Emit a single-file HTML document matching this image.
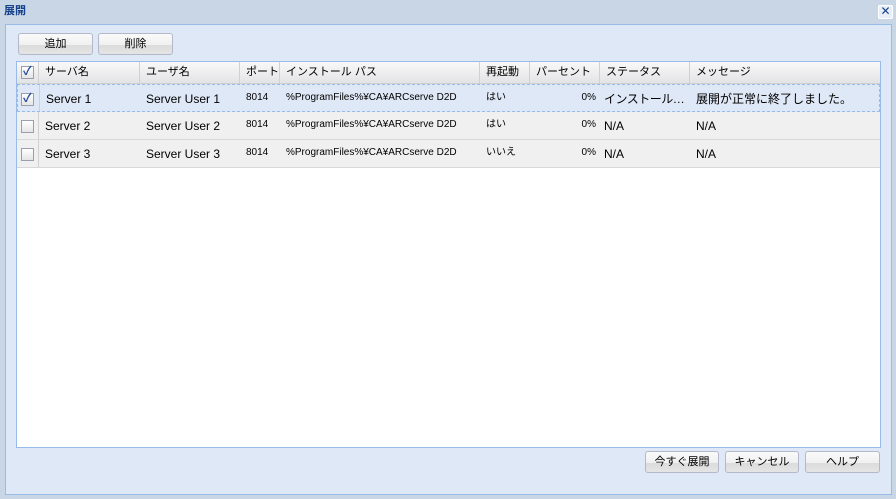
<!DOCTYPE html>
<html><head><meta charset="utf-8"><style>
*{box-sizing:border-box;margin:0;padding:0}
body{width:896px;height:499px;background:#c9d6e5;font-family:"Liberation Sans","Noto Sans CJK JP",sans-serif;font-size:11px;color:#000;position:relative;overflow:hidden}
.title{position:absolute;left:4px;top:2px;font-size:11px;font-weight:bold;color:#15428b}
.close{position:absolute;left:878px;top:5px;width:15px;height:14px;background:#e8eef7;border:1px solid #fff;border-radius:2px;color:#15428b;font-size:12px;line-height:11px;text-align:center}
.panel{position:absolute;left:5px;top:24px;width:887px;height:471px;background:#dfe8f6;border:1px solid #99bbe8}
.btn{position:absolute;height:22px;border:1px solid #b5b8c8;border-radius:3px;background:linear-gradient(#fafafa 0,#f0f0f0 55%,#dcdcdc 56%,#e4e4e4 100%);text-align:center;line-height:20px;font-size:11px}
.grid{position:absolute;left:16px;top:61px;width:865px;height:387px;background:#fff;border:1px solid #99bbe8}
.row{position:absolute;left:0;width:863px;display:flex}
.row div{border-right:1px solid #d0d0d0;padding-left:6px;white-space:nowrap;overflow:hidden}
.hdr{top:0;height:22px;background:linear-gradient(#f9f9f9,#e3e4e6);border-bottom:1px solid #d0d0d0;line-height:21px}
.r{height:28px;line-height:28px;background:#f0f0f0;border-bottom:1px solid #d8d8d8;font-size:12px}
.r .s{font-size:10px;line-height:26px}
.sel{background:#dfe8f6;border:1px dashed #99bbe8}
.cb{width:13px;height:13px;border:1px solid #98a0ad;background:linear-gradient(#fff,#e5e5e5);margin:0;display:inline-block;vertical-align:middle;position:relative}
.cb.c::after{content:"✓";position:absolute;left:1px;top:-4px;font-size:12px;color:#2b4fa0;font-weight:bold;line-height:16px}
.ell{text-overflow:ellipsis}
</style></head><body>
<div class="title">展開</div>
<div class="close">✕</div>
<div class="panel"></div>
<div class="btn" style="left:18px;top:33px;width:75px">追加</div>
<div class="btn" style="left:98px;top:33px;width:75px">削除</div>
<div class="grid">
<div class="row hdr">
<div style="width:22px;padding-left:4px"><span class="cb c"></span></div>
<div style="width:101px">サーバ名</div><div style="width:100px">ユーザ名</div><div style="width:40px">ポート</div><div style="width:200px">インストール パス</div><div style="width:50px">再起動</div><div style="width:70px">パーセント</div><div style="width:90px">ステータス</div><div style="flex:1;border:none">メッセージ</div>
</div>
<div class="row r sel" style="top:22px">
<div style="width:22px;padding-left:3px"><span class="cb c"></span></div>
<div style="width:100px;border:none">Server 1</div><div style="width:100px;border:none">Server User 1</div><div class="s" style="width:40px;border:none">8014</div><div class="s" style="width:200px;border:none">%ProgramFiles%¥CA¥ARCserve D2D</div><div class="s" style="width:50px;border:none">はい</div><div class="s" style="width:70px;border:none;text-align:right;padding-right:4px">0%</div><div class="ell" style="width:90px;border:none;padding-left:4px;padding-right:2px;letter-spacing:-0.5px">インストールは正常に終了</div><div style="flex:1;border:none">展開が正常に終了しました。</div>
</div>
<div class="row r" style="top:50px">
<div style="width:22px;padding-left:4px"><span class="cb"></span></div>
<div style="width:101px;border:none">Server 2</div><div style="width:100px;border:none">Server User 2</div><div class="s" style="width:40px;border:none">8014</div><div class="s" style="width:200px;border:none">%ProgramFiles%¥CA¥ARCserve D2D</div><div class="s" style="width:50px;border:none">はい</div><div class="s" style="width:70px;border:none;text-align:right;padding-right:4px">0%</div><div style="width:90px;border:none;padding-left:4px">N/A</div><div style="flex:1;border:none">N/A</div>
</div>
<div class="row r" style="top:78px">
<div style="width:22px;padding-left:4px"><span class="cb"></span></div>
<div style="width:101px;border:none">Server 3</div><div style="width:100px;border:none">Server User 3</div><div class="s" style="width:40px;border:none">8014</div><div class="s" style="width:200px;border:none">%ProgramFiles%¥CA¥ARCserve D2D</div><div class="s" style="width:50px;border:none">いいえ</div><div class="s" style="width:70px;border:none;text-align:right;padding-right:4px">0%</div><div style="width:90px;border:none;padding-left:4px">N/A</div><div style="flex:1;border:none">N/A</div>
</div>
</div>
<div class="btn" style="left:645px;top:451px;width:74px">今すぐ展開</div>
<div class="btn" style="left:725px;top:451px;width:74px">キャンセル</div>
<div class="btn" style="left:805px;top:451px;width:75px">ヘルプ</div>
</body></html>
